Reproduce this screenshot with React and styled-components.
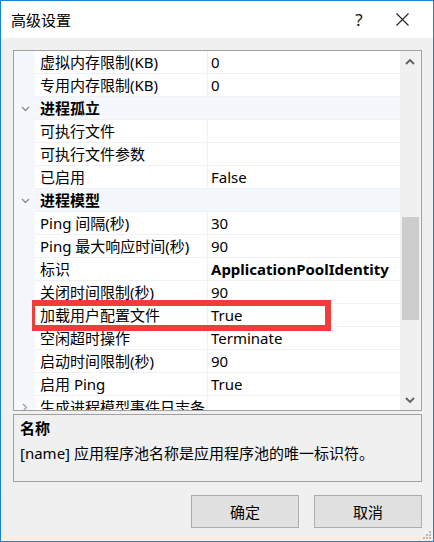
import React from 'react';
import styled, { createGlobalStyle } from 'styled-components';

const GlobalStyle = createGlobalStyle`
  html, body {
    margin: 0;
    padding: 0;
    background: #ffffff;
  }
  body {
    font-family: "Noto Sans", "Noto Sans CJK SC", sans-serif;
    font-size: 15px;
    color: #000;
  }
`;

const rows = [
  { type: 'prop', name: '虚拟内存限制(KB)', value: '0' },
  { type: 'prop', name: '专用内存限制(KB)', value: '0' },
  { type: 'cat', name: '进程孤立' },
  { type: 'prop', name: '可执行文件', value: '' },
  { type: 'prop', name: '可执行文件参数', value: '' },
  { type: 'prop', name: '已启用', value: 'False' },
  { type: 'cat', name: '进程模型' },
  { type: 'prop', name: 'Ping 间隔(秒)', value: '30' },
  { type: 'prop', name: 'Ping 最大响应时间(秒)', value: '90' },
  { type: 'prop', name: '标识', value: 'ApplicationPoolIdentity', bold: true },
  { type: 'prop', name: '关闭时间限制(秒)', value: '90' },
  { type: 'prop', name: '加载用户配置文件', value: 'True', marked: true },
  { type: 'prop', name: '空闲超时操作', value: 'Terminate' },
  { type: 'prop', name: '启动时间限制(秒)', value: '90' },
  { type: 'prop', name: '启用 Ping', value: 'True' },
  { type: 'sub', name: '生成进程模型事件日志条目', value: '' },
];

const Window = styled.div`
  position: relative;
  width: 434px;
  height: 542px;
  box-sizing: border-box;
  border: 1px solid #1883d7;
  background: #f0f0f0;
  display: flex;
  flex-direction: column;
  overflow: hidden;
`;

const TitleBar = styled.div`
  height: 37px;
  background: #ffffff;
  display: flex;
  align-items: center;
  padding-left: 10px;
`;

const Title = styled.div`
  flex: 1;
  font-size: 15px;
  line-height: 20px;
  color: #000;
`;

const TitleButton = styled.div`
  width: ${(p) => p.w}px;
  height: 36px;
  display: flex;
  align-items: center;
  justify-content: center;
  font-size: 17px;
  color: #111;
`;

const Body = styled.div`
  flex: 1;
  display: flex;
  flex-direction: column;
  padding: 12px 11px 0 12px;
`;

const Grid = styled.div`
  height: 361px;
  box-sizing: border-box;
  border: 1px solid #a0a0a0;
  display: flex;
  background: #f4f7fc;
  overflow: hidden;
`;

const Rows = styled.div`
  width: 386px;
  display: flex;
  flex-direction: column;
`;

const Row = styled.div`
  position: relative;
  flex: 0 0 23px;
  display: grid;
  grid-template-columns: 21px 172px 1px 192px;
`;

const Gutter = styled.div`
  display: flex;
  align-items: center;
  justify-content: center;
  padding-left: 1px;
`;

const Cell = styled.div`
  box-sizing: border-box;
  height: 23px;
  background: ${(p) => (p.cat ? '#f4f7fc' : '#ffffff')};
  border-bottom: 1px solid #eef1f6;
  padding-left: ${(p) => p.pad}px;
  font-size: 15px;
  line-height: 22px;
  font-weight: ${(p) => (p.bold ? 700 : 400)};
  white-space: nowrap;
  overflow: hidden;
`;

const Divider = styled.div`
  background: ${(p) => (p.cat ? '#f4f7fc' : '#f0f0f0')};
`;

const Mark = styled.div`
  position: absolute;
  z-index: 2;
  left: 18px;
  top: -4px;
  width: 299px;
  height: 31px;
  box-sizing: border-box;
  border: solid #f23c3c;
  border-width: 6px 6px 6px 3px;
  pointer-events: none;
`;

const Scrollbar = styled.div`
  width: 20px;
  background: #f0f0f0;
  display: flex;
  flex-direction: column;
  align-items: center;
`;

const ArrowBox = styled.div`
  height: 20px;
  width: 20px;
  display: flex;
  align-items: center;
  justify-content: center;
`;

const Track = styled.div`
  flex: 1;
  width: 100%;
  display: flex;
  flex-direction: column;
  align-items: center;
`;

const Thumb = styled.div`
  width: 17px;
  background: #cdcdcd;
`;

const Description = styled.div`
  margin-top: 3px;
  height: 68px;
  box-sizing: border-box;
  border: 1px solid #a0a0a0;
  padding: 3px 6px;
`;

const DescTitle = styled.div`
  font-weight: 700;
  font-size: 15px;
  line-height: 20px;
`;

const DescText = styled.div`
  margin-top: 5px;
  font-size: 15px;
  line-height: 20px;
`;

const ButtonRow = styled.div`
  margin-top: 13px;
  display: flex;
  justify-content: flex-end;
  gap: 15px;
`;

const Button = styled.div`
  width: 108px;
  height: 33px;
  box-sizing: border-box;
  border: 1px solid #adadad;
  background: #e1e1e1;
  display: flex;
  align-items: center;
  justify-content: center;
  font-size: 15px;
`;

const Grip = styled.svg`
  position: absolute;
  right: 2px;
  bottom: 2px;
`;

const ChevronDown = () => (
  <svg width="9" height="6" viewBox="0 0 9 6">
    <polyline points="1,1 4.5,4.5 8,1" fill="none" stroke="#8a8a8a" strokeWidth="1.3" />
  </svg>
);

const ChevronRight = () => (
  <svg width="6" height="9" viewBox="0 0 6 9">
    <polyline points="1,1 4.5,4.5 1,8" fill="none" stroke="#9a9a9a" strokeWidth="1.2" />
  </svg>
);

const ScrollArrow = ({ up }) => (
  <svg width="10" height="7" viewBox="0 0 10 7">
    <polyline
      points={up ? '1,6 5,2 9,6' : '1,1 5,5 9,1'}
      fill="none"
      stroke="#606060"
      strokeWidth="1.8"
    />
  </svg>
);

const App = () => {
  return (
    <>
      <GlobalStyle />
      <Window>
        <TitleBar>
          <Title>高级设置</Title>
          <TitleButton w={40}>?</TitleButton>
          <TitleButton w={46} style={{ marginRight: 8 }}>
            <svg width="13" height="13" viewBox="0 0 13 13">
              <path d="M0.5 0.5 L12.5 12.5 M12.5 0.5 L0.5 12.5" stroke="#222" strokeWidth="1.1" />
            </svg>
          </TitleButton>
        </TitleBar>
        <Body>
          <Grid>
            <Rows>
              {rows.map((r, i) => (
                <Row key={i}>
                  <Gutter>
                    {r.type === 'cat' && <ChevronDown />}
                    {r.type === 'sub' && <ChevronRight />}
                  </Gutter>
                  <Cell cat={r.type === 'cat'} bold={r.type === 'cat'} pad={5}>
                    {r.name}
                  </Cell>
                  <Divider cat={r.type === 'cat'} />
                  <Cell cat={r.type === 'cat'} bold={r.bold} pad={3}>
                    {r.value}
                  </Cell>
                  {r.marked && <Mark />}
                </Row>
              ))}
            </Rows>
            <Scrollbar>
              <ArrowBox>
                <ScrollArrow up />
              </ArrowBox>
              <Track>
                <Thumb style={{ marginTop: 146, height: 103 }} />
              </Track>
              <ArrowBox>
                <ScrollArrow />
              </ArrowBox>
            </Scrollbar>
          </Grid>
          <Description>
            <DescTitle>名称</DescTitle>
            <DescText>[name] 应用程序池名称是应用程序池的唯一标识符。</DescText>
          </Description>
          <ButtonRow>
            <Button>确定</Button>
            <Button>取消</Button>
          </ButtonRow>
        </Body>
        <Grip width="8" height="8" viewBox="0 0 8 8">
          <rect x="6" y="0" width="2" height="2" fill="#b8b8b8" />
          <rect x="3" y="3" width="2" height="2" fill="#b8b8b8" />
          <rect x="6" y="3" width="2" height="2" fill="#b8b8b8" />
          <rect x="0" y="6" width="2" height="2" fill="#b8b8b8" />
          <rect x="3" y="6" width="2" height="2" fill="#b8b8b8" />
          <rect x="6" y="6" width="2" height="2" fill="#b8b8b8" />
        </Grip>
      </Window>
    </>
  );
};

export default App;
